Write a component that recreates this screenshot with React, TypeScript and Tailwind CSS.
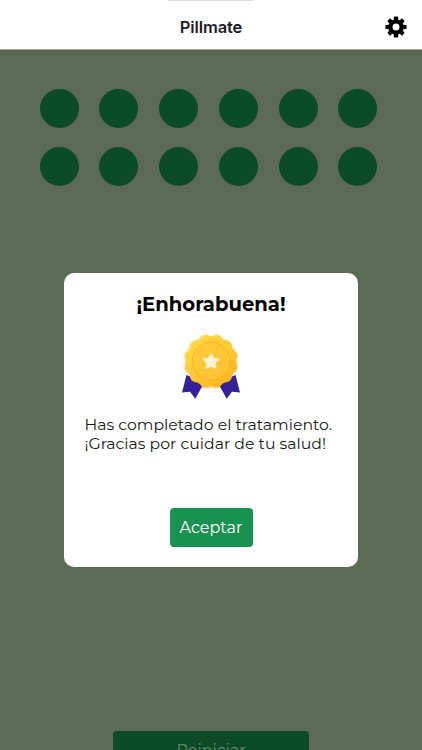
import React from "react";

const doses = Array.from({ length: 12 }, (_, i) => i + 1);

// 12 soft lobes around the medal
const medalPath =
  Array.from({ length: 120 }, (_, i) => {
    const a = (i / 120) * Math.PI * 2;
    const r = 26.2 + 1.0 * Math.cos(12 * a + Math.PI);
    return `${i === 0 ? "M" : "L"}${(41 + r * Math.sin(a)).toFixed(2)} ${(36.2 - r * Math.cos(a)).toFixed(2)}`;
  }).join(" ") + "Z";

function GearIcon() {
  return (
    <svg viewBox="-11 -11 22 22" className="h-[22px] w-[22px]" fill="#000">
      {[0, 90, 180, 270].map((deg) => (
        <path key={deg} d="M-2.4-6-2.1-10Q-2-10.6-1.4-10.6H1.4Q2-10.6 2.1-10L2.4-6Z" transform={`rotate(${deg})`} />
      ))}
      {[45, 135, 225, 315].map((deg) => (
        <path key={deg} d="M-2.3-6-2-9.6Q-1.9-10.3-1.2-10.3H1.2Q1.9-10.3 2-9.6L2.3-6Z" transform={`rotate(${deg})`} />
      ))}
      <path fillRule="evenodd" d="M0-7.6A7.6 7.6 0 1 1 0 7.6 7.6 7.6 0 1 1 0-7.6ZM0-3.5A3.5 3.5 0 1 0 0 3.5 3.5 3.5 0 1 0 0-3.5Z" />
    </svg>
  );
}

function Medal() {
  return (
    <svg viewBox="0 0 82 80" className="h-20 w-[82px]">
      <defs>
        <linearGradient id="gold" x1="0" y1="0" x2="0.75" y2="1">
          <stop offset="0" stopColor="#ffdf4d" />
          <stop offset="0.5" stopColor="#ffcb35" />
          <stop offset="1" stopColor="#ffb51e" />
        </linearGradient>
        <linearGradient id="face" x1="0" y1="0" x2="1" y2="1">
          <stop offset="0" stopColor="#ffcb38" />
          <stop offset="1" stopColor="#ffc236" />
        </linearGradient>
        <filter id="soft" x="-20%" y="-20%" width="140%" height="150%">
          <feDropShadow dx="0" dy="1" stdDeviation="1" floodColor="#6b4a38" floodOpacity="0.28" />
        </filter>
      </defs>
      <path d="M16.5 50 12 67.5 20 66.8 25.3 73.8 34 58Z" fill="#35209a" />
      <path d="M65.5 50 70 67.5 62 66.8 56.7 73.8 48 58Z" fill="#35209a" />
      <path d={medalPath} fill="url(#gold)" filter="url(#soft)" />
      <circle cx="41" cy="36" r="18.8" fill="url(#face)" stroke="#f8ad20" strokeWidth="0.8" />
      <path
        d="M41 28.2 43.6 33.2 49.1 34.1 45.2 38.1 46 43.7 41 41.2 36 43.7 36.8 38.1 32.9 34.1 38.4 33.2Z"
        fill="#fff5d4"
        stroke="#fff5d4"
        strokeWidth="0.9"
        strokeLinejoin="round"
      />
    </svg>
  );
}

export default function App() {
  return (
    <div className="relative flex h-[750px] w-[422px] flex-col overflow-hidden bg-[#5c6955] font-['Montserrat','Inter',sans-serif]">
      <header className="relative grid h-[50px] shrink-0 grid-cols-[1fr_auto_1fr] items-center border-b border-[#a4aaa1] bg-white pt-[5px]">
        <div className="absolute top-0 left-[168px] h-px w-[86px] bg-[#dcdcdc]" />
        <h1 className="col-start-2 font-['Inter',sans-serif] text-[16.5px] leading-5 font-semibold tracking-[-0.12px] text-[#1c1c1e]">Pillmate</h1>
        <button className="mr-[15px] justify-self-end" aria-label="Ajustes">
          <GearIcon />
        </button>
      </header>

      <main className="flex flex-1 flex-col items-center">
        <div className="mt-[38.5px] mr-[5px] grid grid-cols-6 gap-x-[20.8px] gap-y-[19.5px]">
          {doses.map((dose) => (
            <div key={dose} className="h-[39px] w-[39px] rounded-full bg-[#0b4b27]" />
          ))}
        </div>
        <button className="mt-auto flex h-[19px] w-[196px] shrink-0 justify-center overflow-hidden rounded-t-[4px] bg-[#0b4b27] pt-[10px] text-[15.9px] leading-5 text-[#6d8a70]">
          Reiniciar
        </button>
      </main>

      {/* Treatment completed dialog */}
      <div className="absolute inset-0 flex items-start justify-center pt-[272.5px]">
        <section role="dialog" className="flex h-[294px] w-[294px] flex-col items-center rounded-[10px] bg-white">
          <h2 className="mt-[19.5px] text-[19.6px] leading-6 font-bold whitespace-nowrap text-black">¡Enhorabuena!</h2>
          <div className="mt-[9px]">
            <Medal />
          </div>
          <div className="mt-[10px] ml-[20.5px] self-start text-[15.7px] leading-[19px] whitespace-nowrap text-[#191919]">
            <p>Has completado el tratamiento.</p>
            <p>¡Gracias por cuidar de tu salud!</p>
          </div>
          <button className="mt-auto mb-[19.5px] h-[39px] w-[83px] rounded-[4px] bg-[#199150] text-[16px] text-white">
            Aceptar
          </button>
        </section>
      </div>
    </div>
  );
}
